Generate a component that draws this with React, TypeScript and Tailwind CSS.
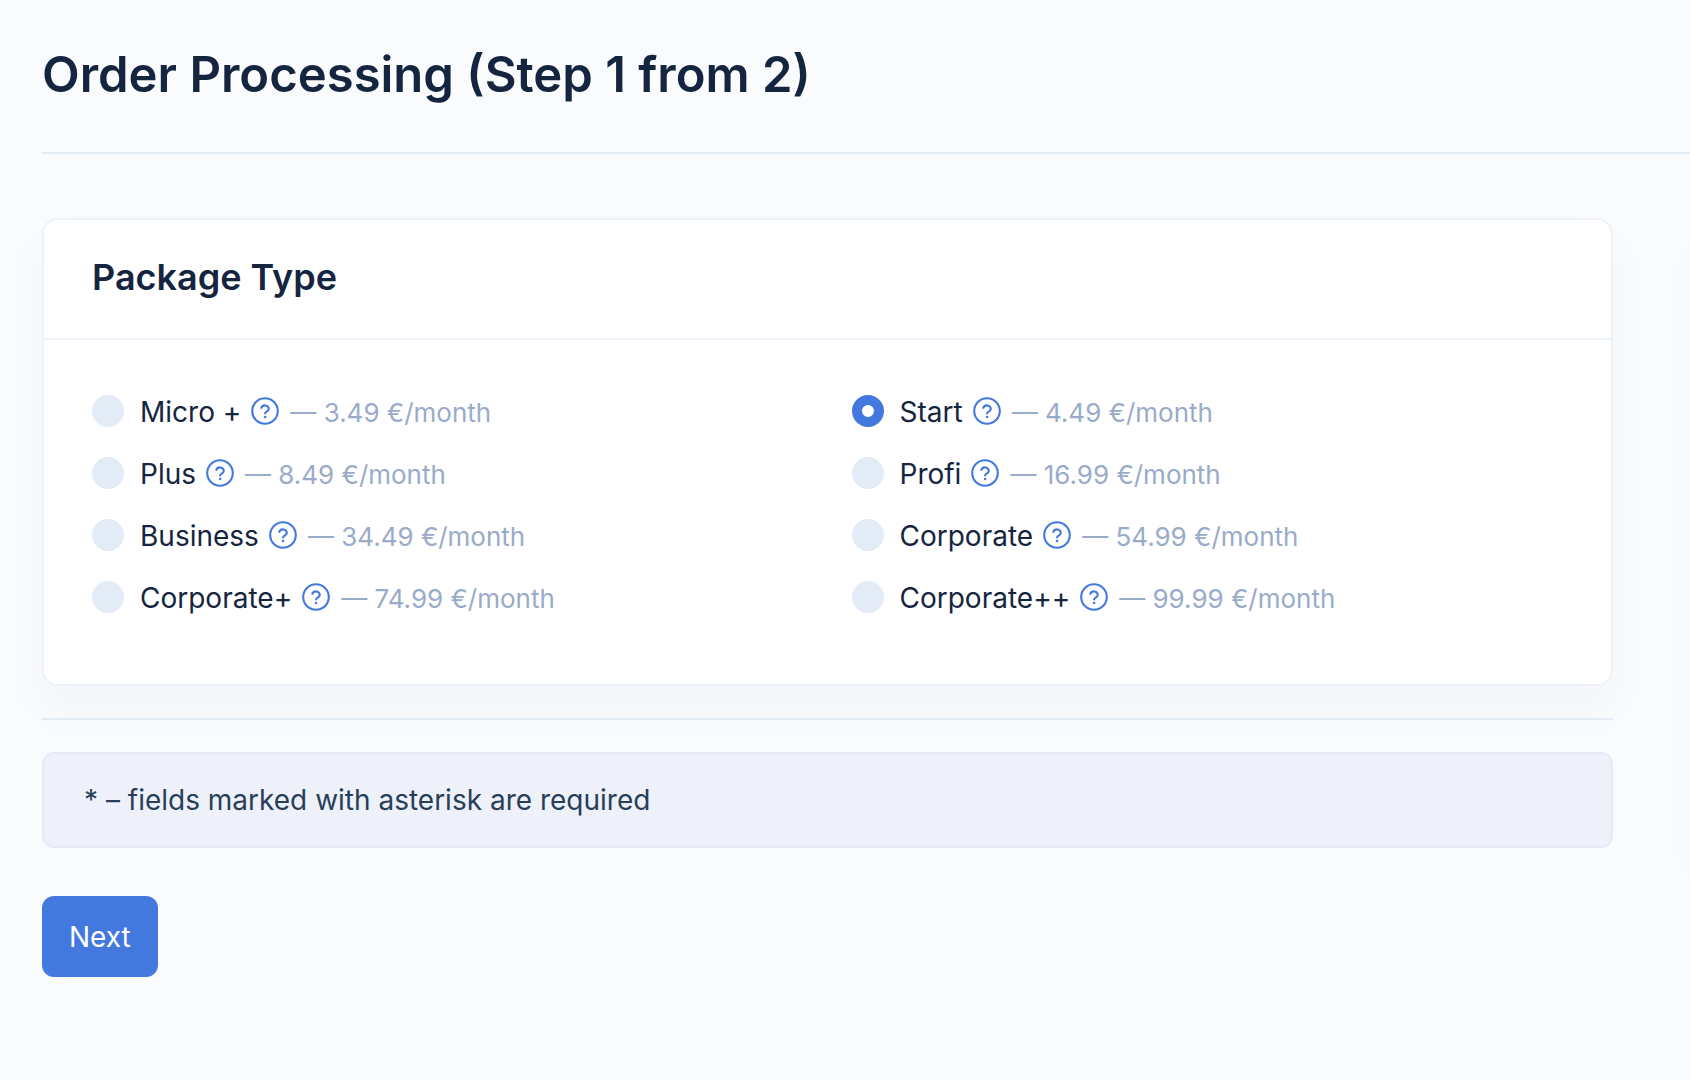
import { useState } from "react";

type Plan = { id: string; name: string; price: string };

const plans: Plan[] = [
  { id: "micro", name: "Micro +", price: "3.49" },
  { id: "start", name: "Start", price: "4.49" },
  { id: "plus", name: "Plus", price: "8.49" },
  { id: "profi", name: "Profi", price: "16.99" },
  { id: "business", name: "Business", price: "34.49" },
  { id: "corporate", name: "Corporate", price: "54.99" },
  { id: "corporate-plus", name: "Corporate+", price: "74.99" },
  { id: "corporate-plus-plus", name: "Corporate++", price: "99.99" },
];

function HelpIcon() {
  return (
    <svg
      width="32"
      height="32"
      viewBox="0 0 32 32"
      fill="none"
      stroke="currentColor"
      strokeLinecap="round"
      strokeLinejoin="round"
      aria-hidden="true"
    >
      <circle cx="16" cy="16" r="12.8" strokeWidth="2.1" />
      <path d="M12.3 12.8a3.9 3.9 0 0 1 7.5 1.2c0 2.4-3.7 2.6-3.7 4.4" strokeWidth="2.1" />
      <circle cx="16.1" cy="22" r="1.3" fill="currentColor" stroke="none" />
    </svg>
  );
}

function PlanOption({
  plan,
  checked,
  onSelect,
}: {
  plan: Plan;
  checked: boolean;
  onSelect: () => void;
}) {
  return (
    <div className="flex h-[42px] items-center">
      <input
        type="radio"
        id={plan.id}
        name="package"
        checked={checked}
        onChange={onSelect}
        className="size-8 shrink-0 appearance-none rounded-full bg-[#e3ebf6] checked:border-10 checked:border-[#4378df] checked:bg-white"
      />
      <label htmlFor={plan.id} className="pt-0.5 pl-4 text-[28px] text-[#15253f]">
        {plan.name}
      </label>
      <button type="button" aria-label={`About ${plan.name}`} className="ml-2 text-[#4378df]">
        <HelpIcon />
      </button>
      <span className="ml-[9px] pt-0.5 text-[26px] text-[#9aabc9]">— {plan.price} €/month</span>
    </div>
  );
}

export default function App() {
  const [selected, setSelected] = useState("start");

  return (
    <div className="flex min-h-screen overflow-hidden bg-[#fafbfd] font-[Inter,sans-serif] text-[#15253f]">
      <main className="min-w-0 flex-1 pl-[42px]">
        <header className="border-b-2 border-[#e3ebf6] pt-[43px] pb-[45px]">
          <h1 className="text-[49px] leading-16 font-semibold">
            Order Processing (Step 1 from 2)
          </h1>
        </header>

        <form className="mr-[77px] pt-16" onSubmit={(e) => e.preventDefault()}>
          <section className="rounded-2xl border-2 border-[#edf1f9] bg-white shadow-[0_24px_48px_rgba(18,38,63,0.03)]">
            <div className="border-b-2 border-[#edf1f9] px-12 pt-9 pb-10">
              <h2 className="text-[36px] leading-[42px] font-semibold">Package Type</h2>
            </div>
            <div className="grid grid-cols-2 gap-y-5 pt-[50px] pb-[66px] pl-12">
              {plans.map((plan) => (
                <PlanOption
                  key={plan.id}
                  plan={plan}
                  checked={plan.id === selected}
                  onSelect={() => setSelected(plan.id)}
                />
              ))}
            </div>
          </section>

          <hr className="my-8 border-t-2 border-[#e3ebf6]" />

          <p className="rounded-xl border-2 border-[#e3ebf6] bg-[#eef1f9] px-10 py-6 text-[28px] leading-[44px] text-[#283e59]">
            * – fields marked with asterisk are required
          </p>

          <button
            type="submit"
            className="mt-12 rounded-xl bg-[#4378df] px-[27px] pt-[21px] pb-5 text-[28px] leading-10 text-white"
          >
            Next
          </button>
        </form>
      </main>
      {/* Neighbouring column, of which only the card's shadow is in view */}
      <aside className="mt-[218px] -mr-6 ml-2 h-[638px] w-4 shrink-0 shadow-[0_24px_48px_rgba(18,38,63,0.03)]" />
    </div>
  );
}
